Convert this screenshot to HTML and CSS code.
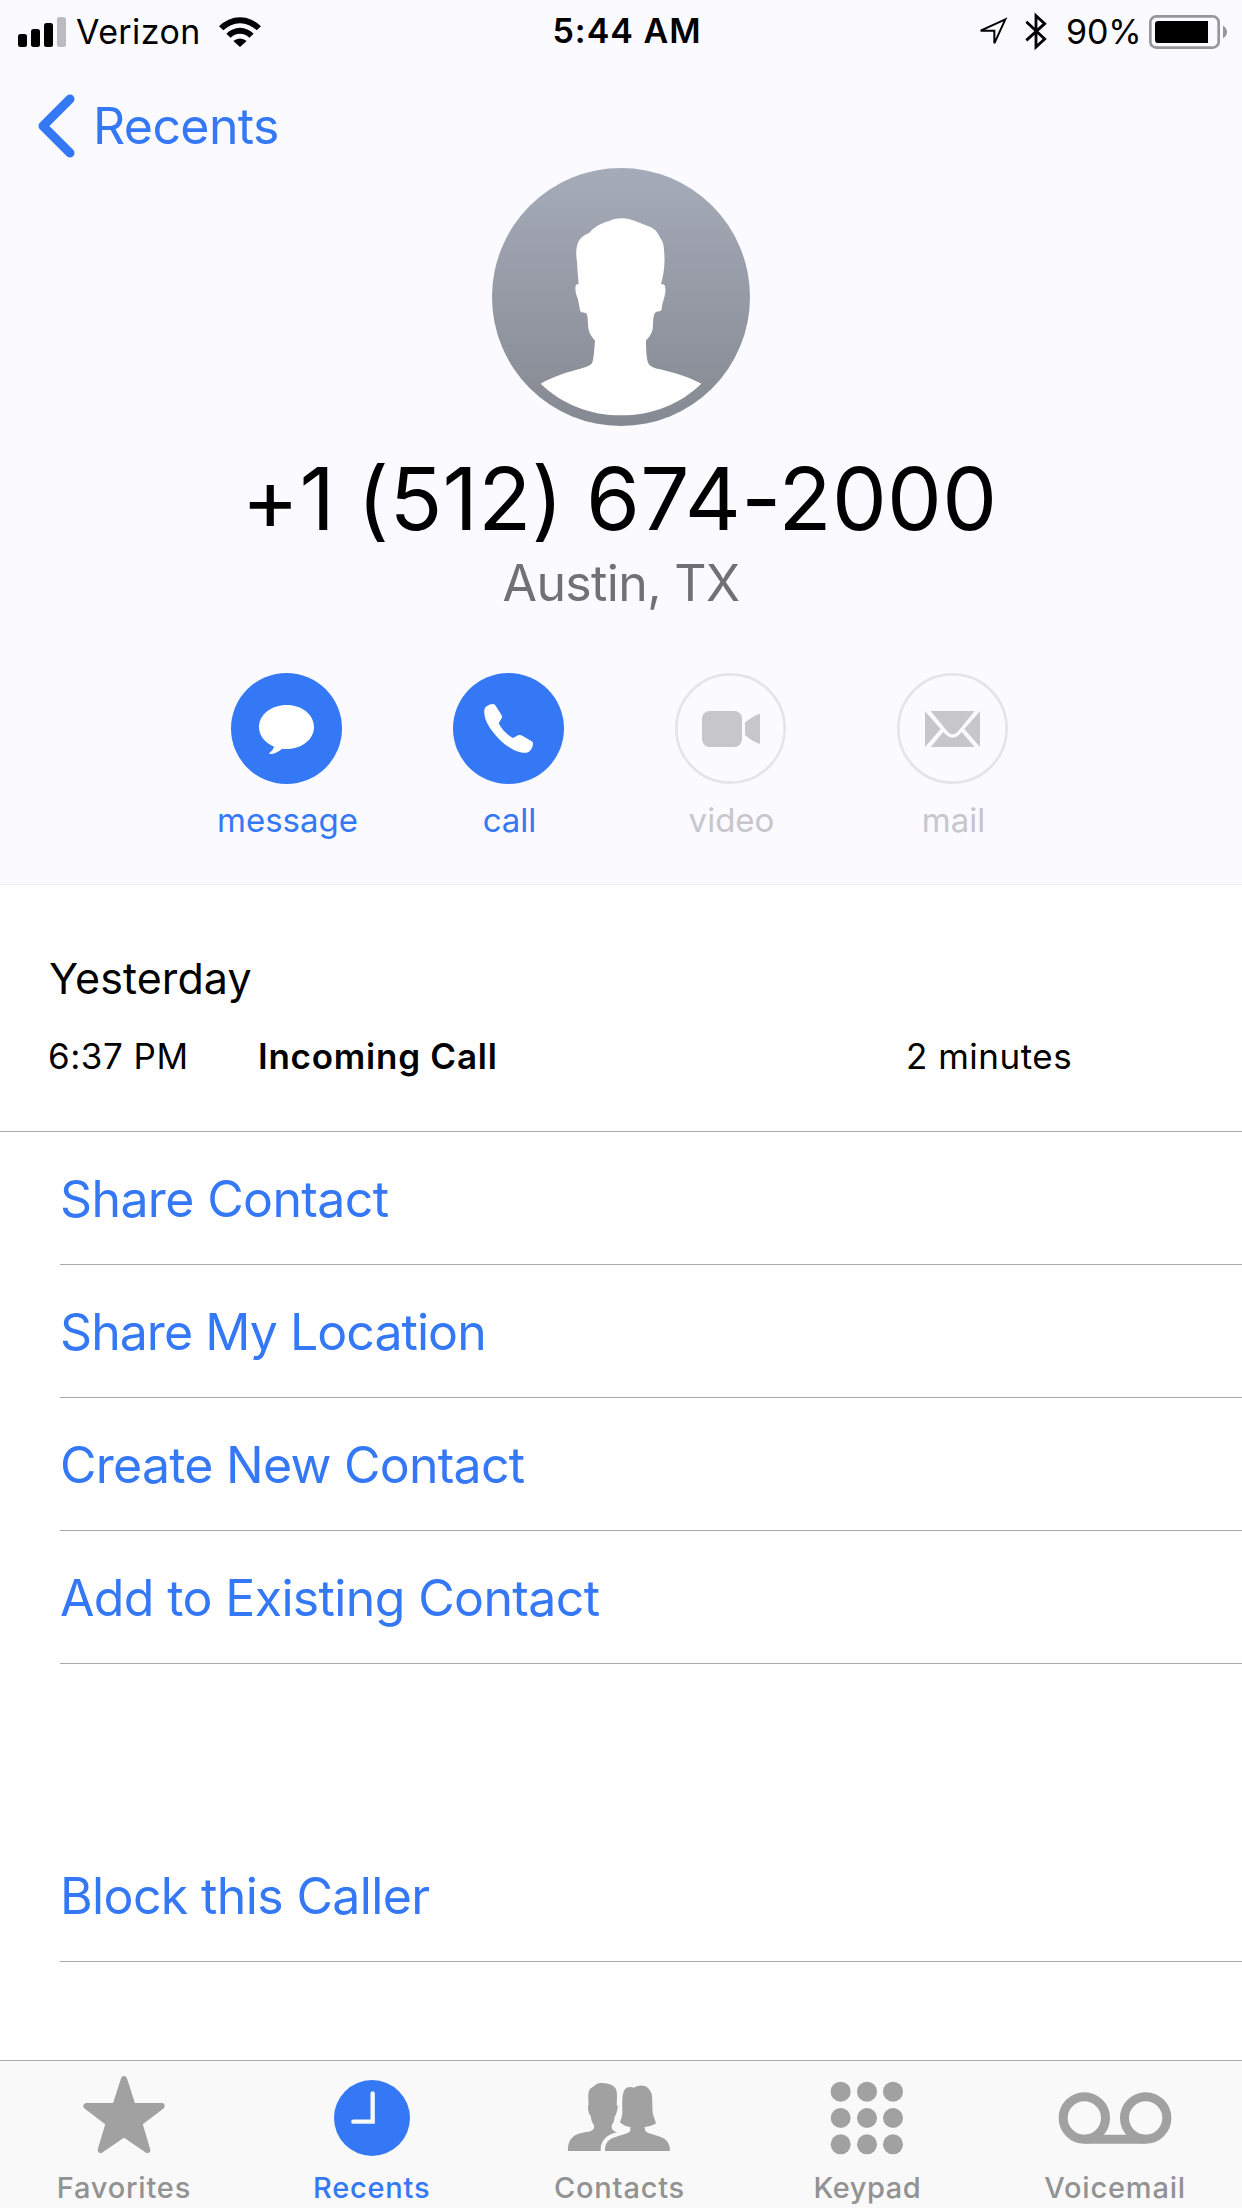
FILE: index.html
```
<!DOCTYPE html>
<html lang="en">
  <head>
    <meta charset="utf-8" />
    <meta name="viewport" content="width=device-width, initial-scale=1.0" />
    <title>Recents</title>
    <link rel="stylesheet" href="styles.css">
  </head>
  <body>
    <div class="screen">
      <header class="header">
        <div class="status-bar">
          <div class="status-left">
            <svg class="signal" viewBox="0 0 48 30">
              <rect x="0" y="17" width="9" height="13" rx="2.5" />
              <rect x="13" y="12" width="9" height="18" rx="2.5" />
              <rect x="26" y="6" width="9" height="24" rx="2.5" />
              <rect x="39" y="0" width="9" height="30" rx="2.5" fill="#bcbbc1" />
            </svg>
            <span class="carrier">Verizon</span>
            <svg class="wifi" viewBox="657 44 126 90">
              <path d="M657 72A87 87 0 0 1 783 72L770 84A70 70 0 0 0 670 84Z" />
              <path d="M679 94A57 57 0 0 1 761 94L748 106A40 40 0 0 0 692 106Z" />
              <path d="M700 116A30 30 0 0 1 740 116L720 134Z" />
            </svg>
          </div>
          <span class="clock">5:44 AM</span>
          <div class="status-right">
            <svg class="location" viewBox="236 47 90 90">
              <path d="M318 54L244 88H285V126Z" fill="none" stroke="#000" stroke-width="6" />
            </svg>
            <svg class="bluetooth" viewBox="376 36 66 111">
              <path d="M380 62L435 114L409 138V44L435 68L380 118" fill="none" stroke="#000" stroke-width="8.500" />
            </svg>
            <span class="percent">90%</span>
            <svg class="battery" viewBox="747 39 234 102">
              <rect x="751" y="43" width="205" height="94" rx="18" fill="none" stroke="#97979a" stroke-width="8" />
              <path d="M775 57H924V123H775Q765 123 765 113V67Q765 57 775 57Z" />
              <path d="M969 71Q981 78 981 90T969 109Z" fill="#97979a" />
            </svg>
          </div>
        </div>
        <a class="back" href="#">
          <svg class="chevron" viewBox="0 0 37 64">
            <path d="M32 5L5 32L32 59" fill="none" stroke="#3478f6" stroke-width="9" stroke-linecap="round" stroke-linejoin="round" />
          </svg>
          <span>Recents</span>
        </a>
        <svg class="avatar" viewBox="36 53 774 774">
          <defs>
            <linearGradient id="avatarFill" x1="0" y1="0" x2="0" y2="1">
              <stop offset="0" stop-color="#a6abb9" />
              <stop offset="1" stop-color="#858991" />
            </linearGradient>
          </defs>
          <circle cx="423" cy="440" r="387" fill="url(#avatarFill)" />
          <path fill="#fff" d="M296 401C293 372 292 345 289 315C287 283 297 261 322 250C329 249 332 240 344 232C359 220 373 216 389 211C401 206 412 204 425 204C456 204 476 218 504 227C524 234 533 246 539 260C547 271 552 282 552 300C556 337 552 369 543 402C556 400 557 408 556 425C554 443 547 455 545 477C543 484 537 483 530 484C518 486 520 517 518 537C513 555 505 563 498 571C498 595 499 617 503 634C507 648 522 653 537 656C586 668 625 679 664 700C600 762 516 795 423 795C332 795 246 762 182 700C220 679 254 668 295 657C311 652 329 648 336 639C341 629 343 595 345 571C337 562 330 552 327 542C322 525 326 501 319 489C313 486 303 490 300 480C297 464 296 450 289 433C285 417 283 400 296 401Z" />
        </svg>
        <h1 class="number">+1 (512) 674-2000</h1>
        <p class="place">Austin, TX</p>
        <div class="actions">
          <div class="action">
            <svg class="action-icon" viewBox="0 0 333 333">
              <circle cx="166.500" cy="166.500" r="166.500" fill="#3478f6" />
              <path fill="#fff" d="M167 96C213 96 249 125 249 162C249 199 213 228 167 228Q160 228 154 227C143 236 131 243 116 243Q113 242 116 239Q127 231 129 221C102 210 84 188 84 162C84 125 121 96 167 96Z" />
            </svg>
            <span class="action-label">message</span>
          </div>
          <div class="action">
            <svg class="action-icon" viewBox="0 0 333 333">
              <circle cx="166.500" cy="166.500" r="166.500" fill="#3478f6" />
              <path fill="#fff" d="M94 112C95 101 107 94 120 93Q124 93 127 97L145 125Q149 131 146 136L137 151C147 170 162 185 180 195L195 187Q202 184 208 188L236 205Q241 208 240 212C239 225 231 237 221 239C199 243 168 226 144 204C120 181 90 143 94 112Z" />
            </svg>
            <span class="action-label">call</span>
          </div>
          <div class="action disabled">
            <svg class="action-icon" viewBox="0 0 333 333">
              <circle cx="166.500" cy="166.500" r="162.500" fill="none" stroke="#e5e4e9" stroke-width="8" />
              <rect x="81" y="114" width="120" height="108" rx="23" fill="#c7c6cb" />
              <path fill="#c7c6cb" d="M210 149Q232 129 255 122V213Q232 206 210 186Z" />
            </svg>
            <span class="action-label">video</span>
          </div>
          <div class="action disabled">
            <svg class="action-icon" viewBox="0 0 333 333">
              <circle cx="166.500" cy="166.500" r="162.500" fill="none" stroke="#e5e4e9" stroke-width="8" />
              <path fill="#c7c6cb" d="M101 114H233L182 176Q167 191 152 176ZM84 115L131 168L84 222ZM249 115L202 168L249 222ZM101 222L139 177L147 185Q167 204 187 185L194 177L233 222Z" />
            </svg>
            <span class="action-label">mail</span>
          </div>
        </div>
      </header>

      <main class="content">
        <section class="log">
          <h2 class="log-day">Yesterday</h2>
          <div class="log-row">
            <span class="log-time">6:37 PM</span>
            <span class="log-type">Incoming Call</span>
            <span class="log-length">2 minutes</span>
          </div>
        </section>
        <nav class="options">
          <a class="option" href="#">Share Contact</a>
          <a class="option my-location" href="#">Share My Location</a>
          <a class="option create" href="#">Create New Contact</a>
          <a class="option" href="#">Add to Existing Contact</a>
          <a class="option block" href="#">Block this Caller</a>
        </nav>
      </main>

      <footer class="tab-bar">
        <a class="tab" href="#">
          <svg class="tab-icon" viewBox="207 33 330 270">
            <path fill="#a1a1a1" stroke="#a1a1a1" stroke-width="18" stroke-linejoin="round" d="M372 87L398 168H485L418 219L442 300L372 252L302 300L326 219L259 168H346Z" />
          </svg>
          <span class="tab-label">Favorites</span>
        </a>
        <a class="tab active" href="#">
          <svg class="tab-icon" viewBox="951 33 330 270">
            <circle cx="1116" cy="204" r="114" fill="#3478f6" />
            <path d="M1118 130V215H1060" fill="none" stroke="#f9f9f9" stroke-width="13" stroke-linecap="round" />
          </svg>
          <span class="tab-label">Recents</span>
        </a>
        <a class="tab" href="#">
          <svg class="tab-icon" viewBox="435 33 330 270">
            <path fill="#a1a1a1" d="M447 303C446 265 465 249 510 245C525 241 525 236 525 226C518 217 517 209 515 198C509 192 508 181 507 173Q506 165 509 164C508 150 506 133 510 122C513 114 520 113 525 109C533 99 541 99 551 99C569 100 587 106 592 120C595 133 594 149 593 164Q597 166 596 175C594 184 592 193 587 200C586 210 584 219 578 226C578 239 579 241 594 247C562 254 544 273 545 303Z" />
            <path fill="#a1a1a1" d="M558 303C557 278 570 267 590 261C612 252 634 251 634 240V231C621 230 611 225 603 217C609 202 610 194 610 184C610 160 608 139 615 122C621 110 634 109 645 113C667 99 691 107 698 132C702 151 698 178 703 196C706 207 709 211 711 220C701 227 691 230 677 231C677 248 683 247 714 257C738 264 753 273 753 303Z" />
          </svg>
          <span class="tab-label">Contacts</span>
        </a>
        <a class="tab" href="#">
          <svg class="tab-icon" viewBox="-28 33 330 270" fill="#a1a1a1">
            <circle cx="58" cy="125" r="30" />
            <circle cx="137" cy="125" r="30" />
            <circle cx="215" cy="125" r="30" />
            <circle cx="58" cy="204" r="30" />
            <circle cx="137" cy="204" r="30" />
            <circle cx="215" cy="204" r="30" />
            <circle cx="58" cy="283" r="30" />
            <circle cx="137" cy="283" r="30" />
            <circle cx="215" cy="283" r="30" />
          </svg>
          <span class="tab-label keypad">Keypad</span>
        </a>
        <a class="tab" href="#">
          <svg class="tab-icon" viewBox="720 33 330 270" fill="none" stroke="#a1a1a1" stroke-width="27">
            <circle cx="793" cy="204" r="63.500" />
            <circle cx="977" cy="204" r="63.500" />
            <path d="M793 267.500H977" />
          </svg>
          <span class="tab-label">Voicemail</span>
        </a>
      </footer>
    </div>
  </body>
</html>
```
FILE: styles.css
```
body,
html {
  margin: 0;
  padding: 0;
  height: 100%;
  font-family: Inter, "Liberation Sans", sans-serif;
  color: #000;
  background-color: #fff;
}

h1,
h2,
p {
  margin: 0;
  font-weight: 400;
}

a {
  color: #3478f6;
  text-decoration: none;
}

svg {
  display: block;
  flex: none;
  overflow: visible;
}

.screen {
  display: flex;
  flex-direction: column;
  width: 1242px;
  height: 2208px;
  overflow: hidden;
}

.header {
  display: flex;
  flex-direction: column;
  align-items: center;
  box-sizing: border-box;
  height: 885px;
  background-color: #fbfaff;
  border-bottom: 1px solid #f1f0f5;
}

/* status bar */
.status-bar {
  display: flex;
  justify-content: space-between;
  width: 100%;
  height: 63px;
  line-height: 62px;
  font-size: 34px;
}

.status-left,
.status-right {
  display: flex;
  align-items: center;
  flex: 1;
}

.status-left {
  padding-left: 18px;
}

.status-right {
  justify-content: flex-end;
  padding-right: 15px;
}

.signal {
  width: 48px;
  height: 30px;
  margin-right: 10px;
}

.carrier {
  width: 143px;
  letter-spacing: 0.4px;
}

.wifi {
  width: 42px;
  height: 30px;
}

.clock {
  padding-left: 9px;
  font-weight: 600;
  letter-spacing: 1px;
}

.location {
  width: 30px;
  height: 30px;
  margin-right: 17px;
}

.bluetooth {
  width: 22px;
  height: 37px;
  margin-right: 19px;
}

.percent {
  width: 83px;
  letter-spacing: -0.2px;
}

.battery {
  width: 78px;
  height: 34px;
}

.back {
  display: flex;
  align-items: center;
  align-self: flex-start;
  height: 84px;
  padding: 21px 0 0 38px;
  font-size: 50px;
  letter-spacing: -0.6px;
}

.chevron {
  width: 37px;
  height: 64px;
  margin-right: 18px;
}

/* contact */
.avatar {
  width: 258px;
  height: 258px;
}

.number {
  margin: 21px 3px 0 0;
  font-size: 87px;
  line-height: 104px;
  letter-spacing: 0.3px;
  word-spacing: -2.5px;
}

.place {
  margin-top: 2px;
  font-size: 50px;
  line-height: 60px;
  letter-spacing: -0.65px;
  color: #717175;
}

.actions {
  display: flex;
  margin: 60px 3px 0 0;
}

.action {
  display: flex;
  flex-direction: column;
  align-items: center;
  width: 222px;
  color: #3478f6;
}

.disabled {
  color: #c7c6cb;
}

.action-icon {
  width: 111px;
  height: 111px;
}

.action-label {
  margin: 16px 0 0 2px;
  font-size: 33px;
  line-height: 40px;
}

/* call log */
.log {
  box-sizing: border-box;
  height: 247px;
  padding: 68px 48px 0;
  border-bottom: 1px solid #aaaaad;
}

.log-day {
  padding-left: 1px;
  font-size: 43px;
  line-height: 50px;
  letter-spacing: 0.1px;
}

.log-row {
  display: flex;
  margin-top: 32px;
  font-size: 35px;
  line-height: 42px;
  letter-spacing: 0.5px;
}

.log-time {
  width: 210px;
}

.log-type {
  width: 648px;
  font-weight: 600;
  letter-spacing: 0.75px;
}

.options {
  display: flex;
  flex-direction: column;
  padding-left: 60px;
}

.option {
  box-sizing: border-box;
  height: 133px;
  padding-top: 2px;
  border-bottom: 1px solid #aaaaad;
  font-size: 50px;
  line-height: 130px;
  letter-spacing: -0.63px;
}

.my-location {
  letter-spacing: -0.95px;
}

.create {
  letter-spacing: -0.75px;
}

.block {
  margin-top: 165px;
}

/* tab bar */
.tab-bar {
  display: flex;
  box-sizing: border-box;
  height: 148px;
  margin-top: auto;
  padding-right: 3px;
  background-color: #f9f9f9;
  border-top: 1px solid #aaaaad;
}

.tab {
  display: flex;
  flex: 1;
  flex-direction: column;
  align-items: center;
  color: #929292;
}

.tab-icon {
  width: 110px;
  height: 90px;
}

.tab-label {
  margin-top: 16px;
  font-size: 29px;
  font-weight: 500;
  line-height: 41px;
  letter-spacing: 0.8px;
}

.keypad {
  letter-spacing: 0.5px;
}

.active {
  color: #3478f6;
}
```
